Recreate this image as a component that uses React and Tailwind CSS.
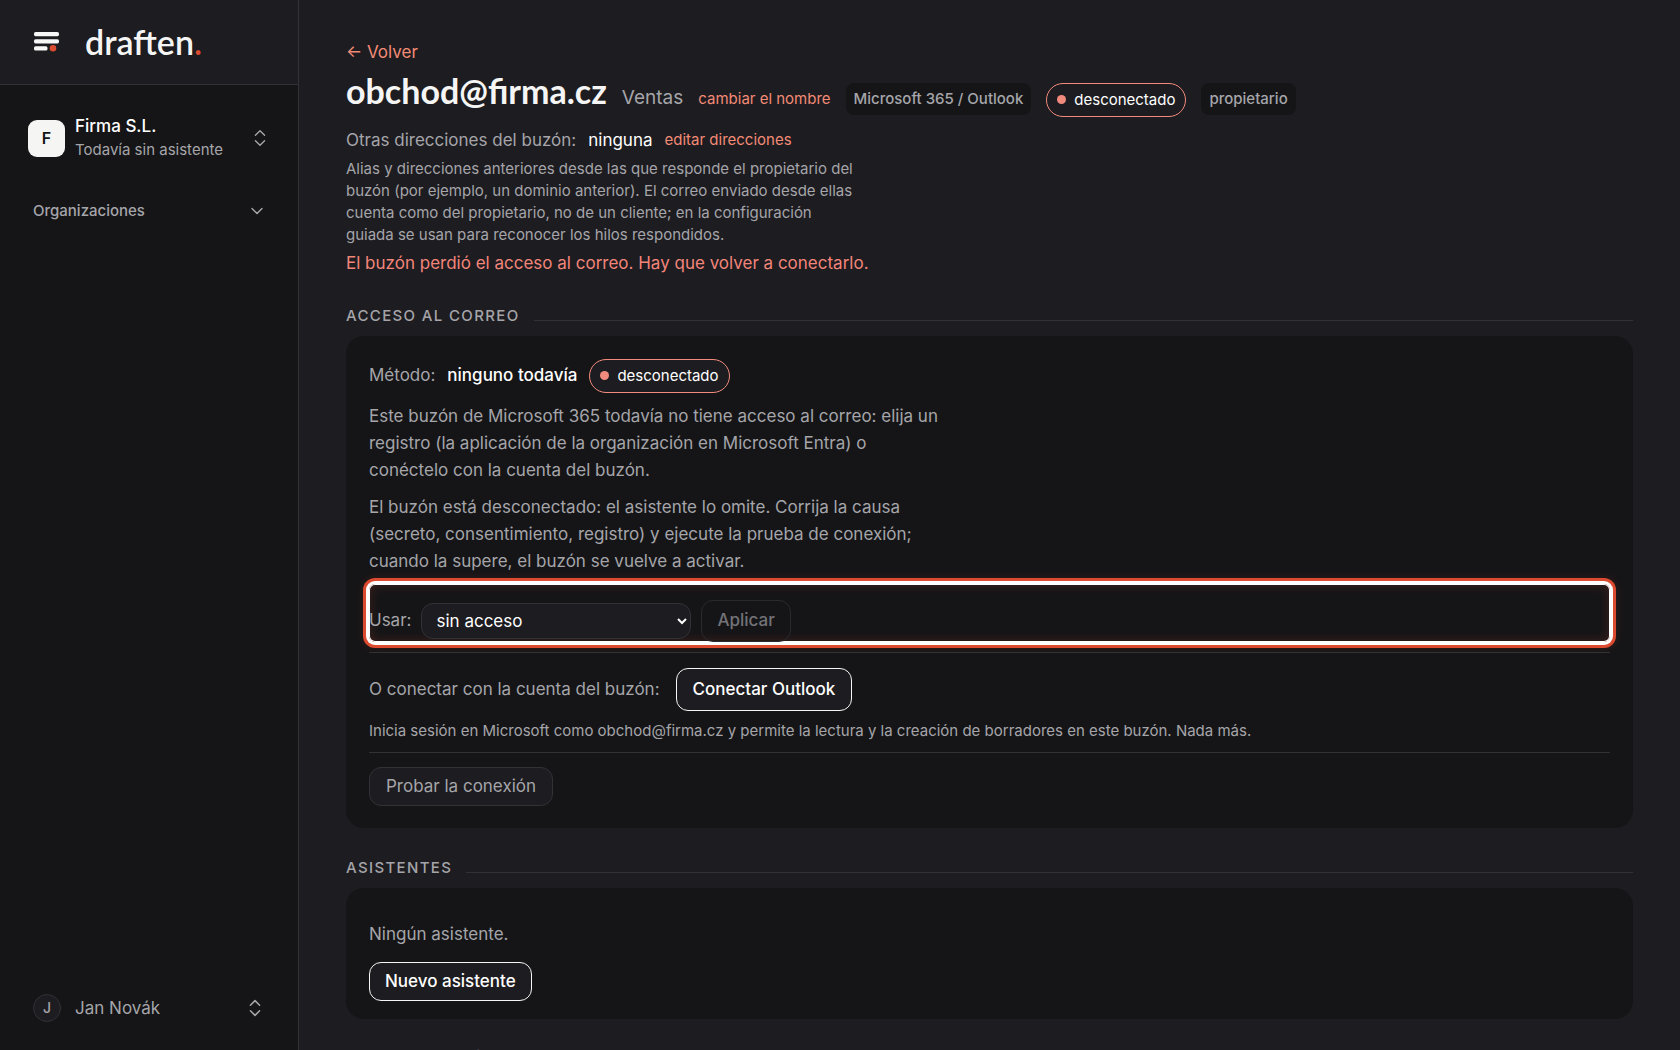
import { ChevronDown, ChevronsUpDown } from "lucide-react";
import React, { useState } from "react";

function Logo() {
    return (
        <a href="#inicio" className="flex items-center gap-6">
            <svg width="28" height="22" viewBox="0 0 28 22" fill="none">
                <rect x="1" y="1" width="25" height="4.2" rx="1.6" fill="#f7f7f7" />
                <rect x="1" y="8.2" width="25" height="4.2" rx="1.6" fill="#f7f7f7" />
                <rect x="1" y="15.3" width="13.5" height="4.2" rx="1.6" fill="#f7f7f7" />
                <circle cx="20" cy="17.3" r="3.3" fill="#dc4a30" />
            </svg>
            <span className="font-[Lato,sans-serif] text-[34px] leading-10 font-semibold text-[#f5f5f5]">
                draften<span className="text-[#dc4a30]">.</span>
            </span>
        </a>
    );
}

function StatusPill({ children }) {
    return (
        <span className="inline-flex items-center gap-2 h-[34px] px-[10px] rounded-full border border-[#f28b7d] bg-[#1d1c20] text-[15px] text-white">
            <span className="size-[9px] rounded-full bg-[#f28b7d]" />
            {children}
        </span>
    );
}

function Tag({ children }) {
    return <span className="h-8 px-2 leading-8 rounded-lg bg-[#151517] text-[15px] font-medium text-[#a5a5aa]">{children}</span>;
}

function Section({ title, children }) {
    return (
        <section className="mt-7">
            <div className="flex items-center gap-[14px]">
                <h2 className="text-[15px] leading-6 font-medium tracking-[0.09em] uppercase text-[#a5a5aa]">{title}</h2>
                <div className="flex-1 h-px mt-[10px] bg-[#323136]" />
            </div>
            <div className="mt-2 px-[23px] rounded-[18px] bg-[#151517]">{children}</div>
        </section>
    );
}

function Sidebar() {
    return (
        <aside className="w-[299px] shrink-0 flex flex-col border-r border-[#323136] bg-[#151517]">
            <div className="h-[85px] shrink-0 flex items-center px-[33px] border-b border-[#323136] bg-[#1d1c20]">
                <Logo />
            </div>
            <button className="flex items-center mt-[29px] pl-7 pr-[27px] text-left">
                <span className="size-[37px] flex items-center justify-center rounded-[9px] bg-[#f5f5f4] text-base font-semibold text-[#151517]">F</span>
                <span className="flex-1 ml-[10px]">
                    <span className="block text-[17px] leading-6 font-medium text-white">Firma S.L.</span>
                    <span className="block text-[15px] leading-6 text-[#a5a5aa]">Todavía sin asistente</span>
                </span>
                <ChevronsUpDown size={22} strokeWidth={1.5} className="text-[#a5a5aa]" />
            </button>
            <button className="flex items-center justify-between mt-[37px] pl-[33px] pr-[31px] text-[15px] leading-6 font-medium text-[#a5a5aa]">
                Organizaciones
                <ChevronDown size={20} strokeWidth={1.7} />
            </button>
            <button className="flex items-center mt-auto mb-7 pl-[33px] pr-8 text-left text-[#a5a5aa]">
                <span className="size-7 flex items-center justify-center rounded-full border border-[#323136] bg-[#1d1c20] text-sm font-medium">J</span>
                <span className="flex-1 ml-[14px] text-[17px] leading-7">Jan Novák</span>
                <ChevronsUpDown size={22} strokeWidth={1.7} />
            </button>
        </aside>
    );
}

export default function App() {
    const [access, setAccess] = useState("none");
    return (
        <div className="h-screen flex overflow-hidden bg-[#1d1c20] font-[Inter,sans-serif] text-[17px] leading-[27px] text-[#a5a5aa]">
            <Sidebar />
            <main className="flex-1 min-w-0 overflow-hidden px-[47px] pt-[38px]">
                <a href="#buzones" className="block leading-7 text-[#f28b76]">← Volver</a>
                <header className="flex items-baseline gap-[15px]">
                    <h1 className="font-[Lato,sans-serif] text-[34px] leading-[50px] font-bold text-[#f5f5f5]">obchod@firma.cz</h1>
                    <span className="text-[19px]">Ventas</span>
                    <button className="text-[15px] text-[#f28b76]">cambiar el nombre</button>
                    <Tag>Microsoft 365 / Outlook</Tag>
                    <StatusPill>desconectado</StatusPill>
                    <Tag>propietario</Tag>
                </header>
                <div className="flex items-center gap-3 mt-[9px] leading-7">
                    <span>Otras direcciones del buzón:</span>
                    <span className="text-white">ninguna</span>
                    <button className="text-[15px] text-[#f28b76]">editar direcciones</button>
                </div>
                <p className="max-w-[510px] mt-1 text-[15px] leading-[22px]">
                    Alias y direcciones anteriores desde las que responde el propietario del buzón (por ejemplo, un dominio anterior). El correo enviado desde ellas cuenta como del propietario, no de un cliente; en la configuración guiada se usan para reconocer los hilos respondidos.
                </p>
                <p className="mt-1 leading-[26px] text-[#f2857a]">El buzón perdió el acceso al correo. Hay que volver a conectarlo.</p>

                <Section title="Acceso al correo">
                    <div className="flex items-center gap-3 pt-[23px]">
                        <span>Método:</span>
                        <span className="font-medium text-white">ninguno todavía</span>
                        <StatusPill>desconectado</StatusPill>
                    </div>
                    <p className="max-w-[575px] mt-[10px]">
                        Este buzón de Microsoft 365 todavía no tiene acceso al correo: elija un registro (la aplicación de la organización en Microsoft Entra) o conéctelo con la cuenta del buzón.
                    </p>
                    <p className="max-w-[575px] mt-[10px]">
                        El buzón está desconectado: el asistente lo omite. Corrija la causa (secreto, consentimiento, registro) y ejecute la prueba de conexión; cuando la supere, el buzón se vuelve a activar.
                    </p>
                    <div className="flex items-center gap-[10px] mt-[9px] pt-4 rounded-[6px] shadow-[0_0_0_3px_#fff,0_0_0_6px_#dc4a30,0_0_10px_6px_#dc4a3026,inset_0_0_0_1px_#fff,inset_0_0_12px_#dc4a3040]">
                        <label htmlFor="access">Usar:</label>
                        <select
                            id="access"
                            value={access}
                            onChange={(e) => setAccess(e.target.value)}
                            className="w-[270px] h-9 px-[10px] pr-0 rounded-xl border border-[#323136] bg-[#1d1c20] text-white"
                        >
                            <option value="none">sin acceso</option>
                        </select>
                        <button disabled className="h-[42px] px-[15px] rounded-xl border border-[#2a292d] font-medium text-[#737378]">Aplicar</button>
                    </div>
                    <div className="flex items-center gap-4 mt-[10px] pt-[15px] border-t border-[#323136]">
                        <span>O conectar con la cuenta del buzón:</span>
                        <button className="h-[43px] px-4 rounded-xl border border-[#f5f5f5] bg-[#1d1c20] font-medium text-white">Conectar Outlook</button>
                    </div>
                    <p className="mt-[9px] pb-[10px] text-[15px] leading-[22px]">
                        Inicia sesión en Microsoft como obchod@firma.cz y permite la lectura y la creación de borradores en este buzón. Nada más.
                    </p>
                    <div className="pt-[14px] pb-[22px] border-t border-[#323136]">
                        <button className="block h-[39px] px-4 rounded-xl border border-[#323136] bg-[#1d1c20]">Probar la conexión</button>
                    </div>
                </Section>

                <Section title="Asistentes">
                    <p className="pt-[33px]">Ningún asistente.</p>
                    <div className="pt-[14px] pb-[18px]">
                        <button className="block h-[39px] px-[15px] rounded-xl border border-[#f5f5f5] bg-[#1d1c20] font-medium text-white">Nuevo asistente</button>
                    </div>
                </Section>

                <Section title="Administración">
                    <p className="py-6">Ninguna acción.</p>
                </Section>
            </main>
        </div>
    );
}
